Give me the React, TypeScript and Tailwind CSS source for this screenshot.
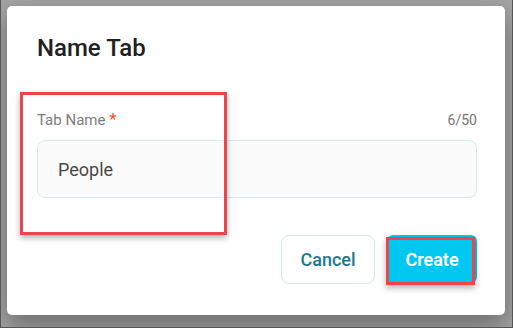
export default function App() {
  return (
    <div
      className="w-[513px] h-[328px] overflow-hidden bg-[#a3a3a3] border-x border-b border-[#555] pt-[6px] pl-[6px]"
      style={{ fontFamily: "Roboto, 'Noto Sans', sans-serif" }}
    >
      <div className="relative w-[498px] h-[309px] bg-white rounded-[5px] shadow-[0_10px_24px_rgba(0,0,0,0.35)] pl-[30px] pr-[28px] pt-[26px]">
        <h1 className="text-[24px] leading-[32px] font-medium text-[#212121]">Name Tab</h1>
        <div className="mt-[45px] flex items-baseline justify-between h-[20px]">
          <div className="text-[15px] leading-[20px] text-[#7d7d7d]">
            Tab Name <span className="text-[#f2541f] text-[17px]">*</span>
          </div>
          <div className="text-[14px] leading-[20px] text-[#767676]">6/50</div>
        </div>
        <div className="mt-[11px] h-[58px] w-full rounded-[8px] border border-[#d3eaee] bg-[#fbfbfb] pl-[20px] flex items-center">
          <span className="text-[18px] text-[#474747]">People</span>
        </div>
        <div className="mt-[37px] flex justify-end gap-[12px]">
          <button className="h-[49px] w-[94px] rounded-[8px] border border-[#d3eaee] bg-white text-[18px] font-medium text-[#1b7893]">
            Cancel
          </button>
          <button className="h-[48px] w-[90px] rounded-[6px] bg-[#00c7f0] text-[18px] font-semibold text-white">
            Create
          </button>
        </div>
        <div className="absolute left-[13px] top-[86px] w-[207px] h-[143px] border-[3px] border-[#f0444a] shadow-[0_3px_6px_rgba(0,0,0,0.3)] pointer-events-none" />
        <div className="absolute left-[379px] top-[231px] w-[89px] h-[48px] border-[3px] border-[#f0444a] shadow-[0_3px_6px_rgba(0,0,0,0.3)] pointer-events-none" />
      </div>
    </div>
  );
}
